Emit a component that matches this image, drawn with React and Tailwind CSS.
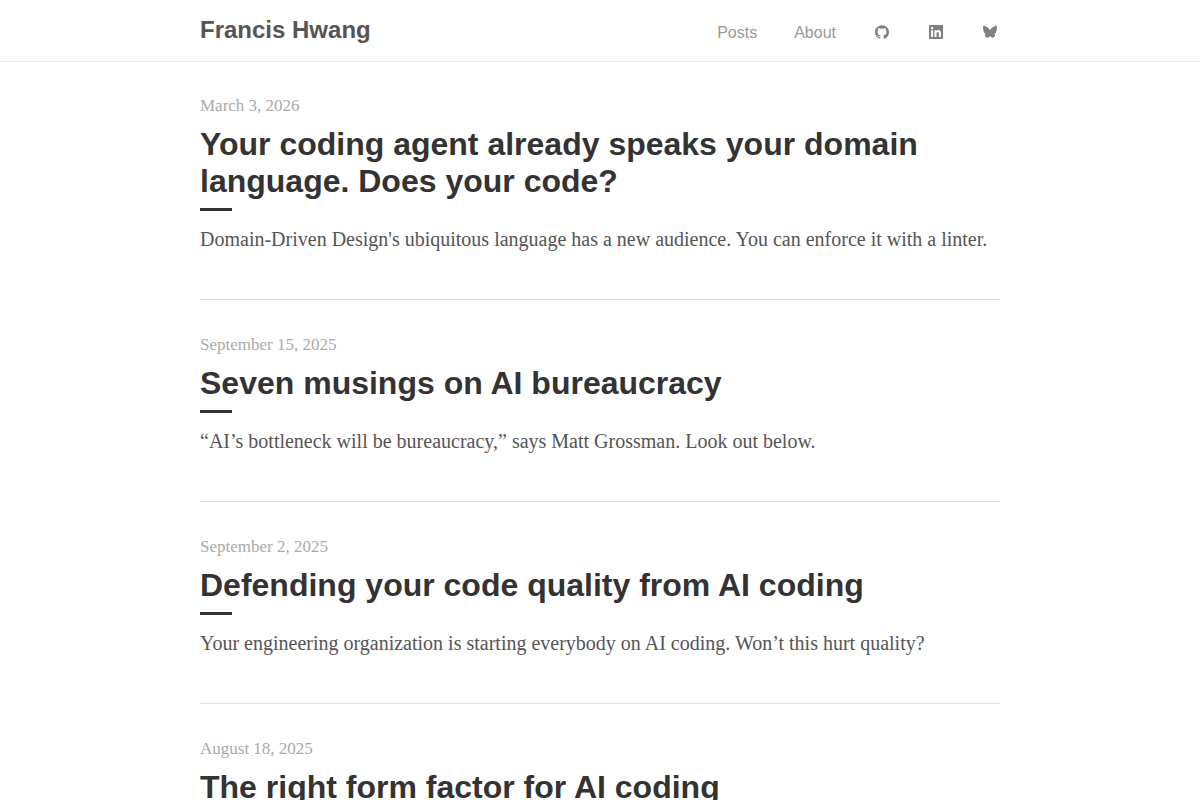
import React from "react";
import { SiGithub, SiLinkedin } from "react-icons/si";

const posts = [
  {
    date: "March 3, 2026",
    title:
      "Your coding agent already speaks your domain language. Does your code?",
    summary:
      "Domain-Driven Design's ubiquitous language has a new audience. You can enforce it with a linter.",
  },
  {
    date: "September 15, 2025",
    title: "Seven musings on AI bureaucracy",
    summary:
      "“AI’s bottleneck will be bureaucracy,” says Matt Grossman. Look out below.",
  },
  {
    date: "September 2, 2025",
    title: "Defending your code quality from AI coding",
    summary:
      "Your engineering organization is starting everybody on AI coding. Won’t this hurt quality?",
  },
  {
    date: "August 18, 2025",
    title: "The right form factor for AI coding",
  },
];

const Butterfly = ({ size }) => (
  <svg width={size} height={size} viewBox="0 0 14 14" fill="currentColor">
    <path d="M7 5.2C6.2 3.5 3.6 1.3 1.2.8.3.6 0 1 0 2c.1 1.900.4 3.900.8 5 .4 1 1.200 1.500 2.200 1.600-1.100.4-1.300 1.400-.7 2.600.9 1.800 3 2.300 4.700-.2 1.700 2.500 3.800 2 4.700.2.6-1.200.4-2.200-.7-2.600 1-.1 1.800-.6 2.200-1.600.4-1.100.7-3.100.8-5 0-1-.3-1.400-1.200-1.200C10.400 1.300 7.800 3.500 7 5.200Z" />
  </svg>
);

const socials = [
  { name: "GitHub", Icon: SiGithub },
  { name: "LinkedIn", Icon: SiLinkedin },
  { name: "Bluesky", Icon: Butterfly },
];

const Header = () => {
  return (
    <header className="border-b border-[#eeeeee] font-['Liberation_Sans',sans-serif]">
      <div className="mx-auto flex h-[61px] max-w-[800px] items-center justify-between">
        <a href="#" className="pb-0.5 text-2xl font-bold text-[#555555]">
          Francis Hwang
        </a>
        <nav className="flex items-center gap-[37px] pt-1 pr-0.5 text-base text-[#999999]">
          <a href="#posts">Posts</a>
          <a href="#about">About</a>
          {socials.map(({ name, Icon }) => (
            <a
              key={name}
              href={`#${name.toLowerCase()}`}
              aria-label={name}
              className="flex w-[17px] justify-center pb-0.5 text-[#808080]"
            >
              <Icon size={14} />
            </a>
          ))}
        </nav>
      </div>
    </header>
  );
};

const Post = ({ date, title, summary }) => {
  return (
    <article className="mb-[33px] border-b border-[#dddddd] pb-12">
      <time className="block text-[17px] leading-6 text-[#aaaaaa]">{date}</time>
      <h2 className="mt-2 font-['Liberation_Sans',sans-serif] text-[32px] leading-[37px] font-bold text-[#333333]">
        <a href="#">{title}</a>
      </h2>
      {/* short rule under the title */}
      <div className="mt-2 h-[3px] w-8 bg-[#333333]"></div>
      {summary && (
        <p className="mt-4 text-xl leading-6 text-[#555555]">{summary}</p>
      )}
    </article>
  );
};

const App = () => {
  return (
    <div className="bg-white font-['Liberation_Serif',serif]">
      <Header />
      <main id="posts" className="mx-auto max-w-[800px] pt-8">
        {posts.map((post) => (
          <Post key={post.date} {...post} />
        ))}
      </main>
    </div>
  );
};

export default App;
